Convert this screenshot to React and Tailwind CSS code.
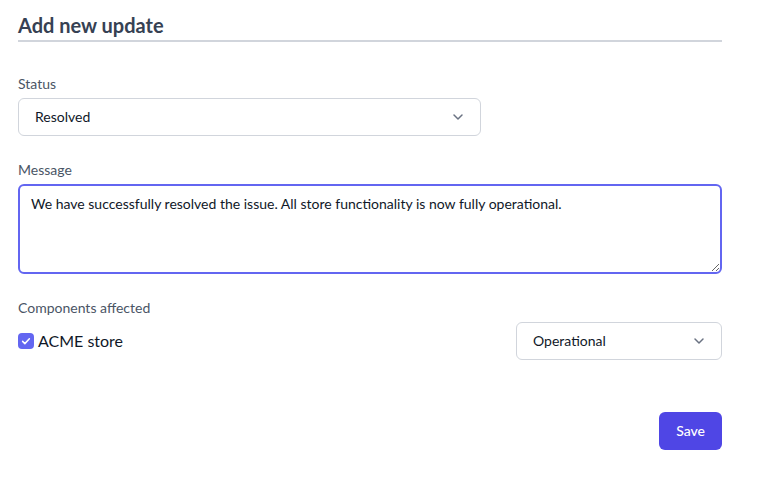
import { useState } from 'react';

function Chevron({ className = '' }) {
  return (
    <svg viewBox="0 0 20 20" fill="none" className={`h-5 w-5 text-gray-500 ${className}`}>
      <path d="M6 8l4 4 4-4" stroke="currentColor" strokeWidth="1.5" strokeLinecap="round" strokeLinejoin="round" />
    </svg>
  );
}

function SelectBox({ value, className = '' }) {
  return (
    <div
      className={`flex h-[38px] items-center justify-between rounded-md border border-gray-300 bg-white pl-4 pr-3 text-sm text-gray-900 ${className}`}
    >
      <span>{value}</span>
      <Chevron />
    </div>
  );
}

export default function App() {
  const [checked, setChecked] = useState(true);
  const [message, setMessage] = useState(
    'We have successfully resolved the issue. All store functionality is now fully operational.'
  );

  return (
    <div className="min-h-[482px] bg-white" style={{ fontFamily: 'Lato, sans-serif' }}>
      <div className="w-[704px] pl-[18px] pt-[11px] box-content">
        {/* Heading */}
        <h2 className="border-b-2 border-gray-300 pb-[1px] text-[20px] font-bold leading-[28px] text-gray-700">
          Add new update
        </h2>

        {/* Status */}
        <div className="mt-[32px]">
          <label className="block text-sm leading-5 text-gray-600">Status</label>
          <SelectBox value="Resolved" className="mt-[4px] w-[463px]" />
        </div>

        {/* Message */}
        <div className="mt-[24px]">
          <label className="block text-sm leading-5 text-gray-600">Message</label>
          <textarea
            value={message}
            onChange={(e) => setMessage(e.target.value)}
            className="mt-[4px] block h-[90px] w-full rounded-md border-2 border-[#6366f1] py-[8px] pl-[11px] pr-3 text-sm leading-5 text-gray-900 outline-none"
          />
        </div>

        {/* Components affected */}
        <div className="mt-[24px]">
          <label className="block text-sm leading-5 text-gray-600">Components affected</label>
          <div className="mt-[4px] flex items-center justify-between">
            <label className="flex items-center gap-[4px] text-base text-gray-900">
              <button
                type="button"
                onClick={() => setChecked(!checked)}
                className={`flex h-4 w-4 items-center justify-center rounded-[4px] ${checked ? 'bg-[#6366f1]' : 'border border-gray-400 bg-white'}`}
              >
                {checked && (
                  <svg viewBox="0 0 16 16" className="h-3 w-3" fill="none">
                    <path d="M3.5 8.5l3 3 6-6.5" stroke="white" strokeWidth="2" strokeLinecap="round" strokeLinejoin="round" />
                  </svg>
                )}
              </button>
              ACME store
            </label>
            <SelectBox value="Operational" className="w-[206px]" />
          </div>
        </div>

        {/* Save */}
        <div className="mt-[52px] flex justify-end">
          <button className="h-[38px] rounded-md bg-[#4f46e5] px-[17px] text-sm font-medium text-white">Save</button>
        </div>
      </div>
    </div>
  );
}
